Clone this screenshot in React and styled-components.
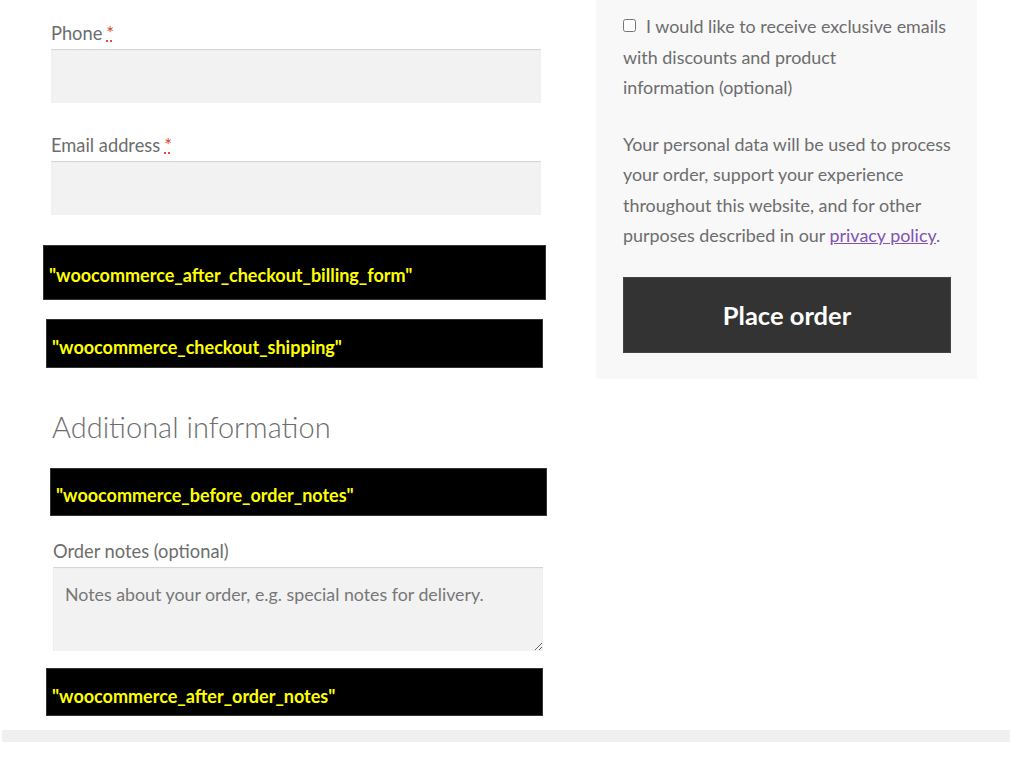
import styled, { createGlobalStyle } from 'styled-components';

const Global = createGlobalStyle`
    body {
        margin: 0;
        background: #fff;
        font-family: Lato, "Open Sans", sans-serif;
        color: #6d6d6d;
    }
`;

const Page = styled.div`
    width: 1024px;
    height: 782px;
    overflow: hidden;
    display: flex;
    flex-direction: column;
`;

const Columns = styled.div`
    display: flex;
    align-items: flex-start;
`;

const Left = styled.section`
    width: 505px;
    margin-left: 43px;
    padding-top: 20px;
    display: flex;
    flex-direction: column;
`;

const Field = styled.div`
    display: flex;
    flex-direction: column;
    margin-left: ${p => p.$x || 8}px;
    margin-top: ${p => p.$top || 0}px;
    width: 490px;
`;

const Label = styled.label`
    font-size: 18.3px;
    line-height: 27px;
    height: 27px;
    margin-bottom: 2px;
    color: #6d6d6d;
`;

const Req = styled.abbr`
    color: #e2401c;
    text-decoration: underline dotted;
    margin-left: 4px;
`;

const Input = styled.div`
    height: 54px;
    background: #f2f2f2;
    box-shadow: inset 0 1px 1px rgba(0, 0, 0, 0.13);
`;

const Notes = styled.textarea`
    height: 84px;
    box-sizing: border-box;
    border: 0;
    background: #f2f2f2;
    box-shadow: inset 0 1px 1px rgba(0, 0, 0, 0.13);
    padding: 16px 12px;
    font-family: Lato, "Open Sans", sans-serif;
    font-size: 17.8px;
    line-height: 22px;
    outline: none;
    resize: vertical;

    &::placeholder {
        color: #777;
    }
`;

const HookBox = styled.div`
    background: #000;
    border: 1px solid #333;
    box-sizing: border-box;
    margin-left: ${p => p.$x}px;
    margin-top: ${p => p.$top}px;
    width: ${p => p.$w}px;
    height: ${p => p.$h}px;
    padding: ${p => p.$pad}px 0 0 5px;
    color: #ffff00;
    font-family: Lato, "Open Sans", sans-serif;
    font-weight: 700;
    font-size: 18px;
    line-height: 22px;
    white-space: nowrap;
`;

const Heading = styled.h3`
    margin: 41px 0 0 9px;
    font-size: 29px;
    line-height: 36px;
    font-weight: 300;
    color: #6d6d6d;
`;

const Right = styled.aside`
    width: 381px;
    margin-left: 48px;
    box-sizing: border-box;
    background: #f8f8f8;
    padding: 11px 26px 26px 27px;
    font-size: 17.9px;
    line-height: 30.5px;
`;

const Consent = styled.label`
    display: block;
`;

const Check = styled.input`
    width: 13px;
    height: 13px;
    margin: 0 10px 0 0;
    vertical-align: 1px;
`;

const Privacy = styled.p`
    margin: 26px 0 0 0;
`;

const Link = styled.a`
    color: #7f54b3;
    text-decoration: underline;
`;

const Button = styled.button`
    display: block;
    margin-top: 26px;
    width: 328px;
    height: 76px;
    border: 1px solid #444;
    background: #333;
    color: #fff;
    font-family: Lato, "Open Sans", sans-serif;
    font-weight: 700;
    font-size: 25.5px;
    cursor: pointer;
`;

const Bar = styled.div`
    margin: 14px 14px 0 2px;
    height: 12px;
    background: #f0f0f0;
`;

function App() {
    return (
        <Page>
            <Global />
            <Columns>
                <Left>
                    <Field>
                        <Label>Phone<Req title="required">*</Req></Label>
                        <Input />
                    </Field>
                    <Field $top={29}>
                        <Label>Email address<Req title="required">*</Req></Label>
                        <Input />
                    </Field>

                    <HookBox $x={0} $top={30} $w={503} $h={55} $pad={18}>"woocommerce_after_checkout_billing_form"</HookBox>
                    <HookBox $x={3} $top={19} $w={497} $h={49} $pad={16}>"woocommerce_checkout_shipping"</HookBox>

                    <Heading>Additional information</Heading>

                    <HookBox $x={7} $top={23} $w={497} $h={48} $pad={15}>"woocommerce_before_order_notes"</HookBox>

                    <Field $x={10} $top={22}>
                        <Label>Order notes (optional)</Label>
                        <Notes placeholder="Notes about your order, e.g. special notes for delivery." />
                    </Field>

                    <HookBox $x={3} $top={17} $w={497} $h={48} $pad={16}>"woocommerce_after_order_notes"</HookBox>
                </Left>

                <Right>
                    <Consent>
                        <Check type="checkbox" />
                        I would like to receive exclusive emails<br />
                        with discounts and product<br />
                        information (optional)
                    </Consent>
                    <Privacy>
                        Your personal data will be used to process your order, support your experience throughout this website, and for other purposes described in our <Link href="#">privacy policy</Link>.
                    </Privacy>
                    <Button>Place order</Button>
                </Right>
            </Columns>
            <Bar />
        </Page>
    );
}

export default App;
